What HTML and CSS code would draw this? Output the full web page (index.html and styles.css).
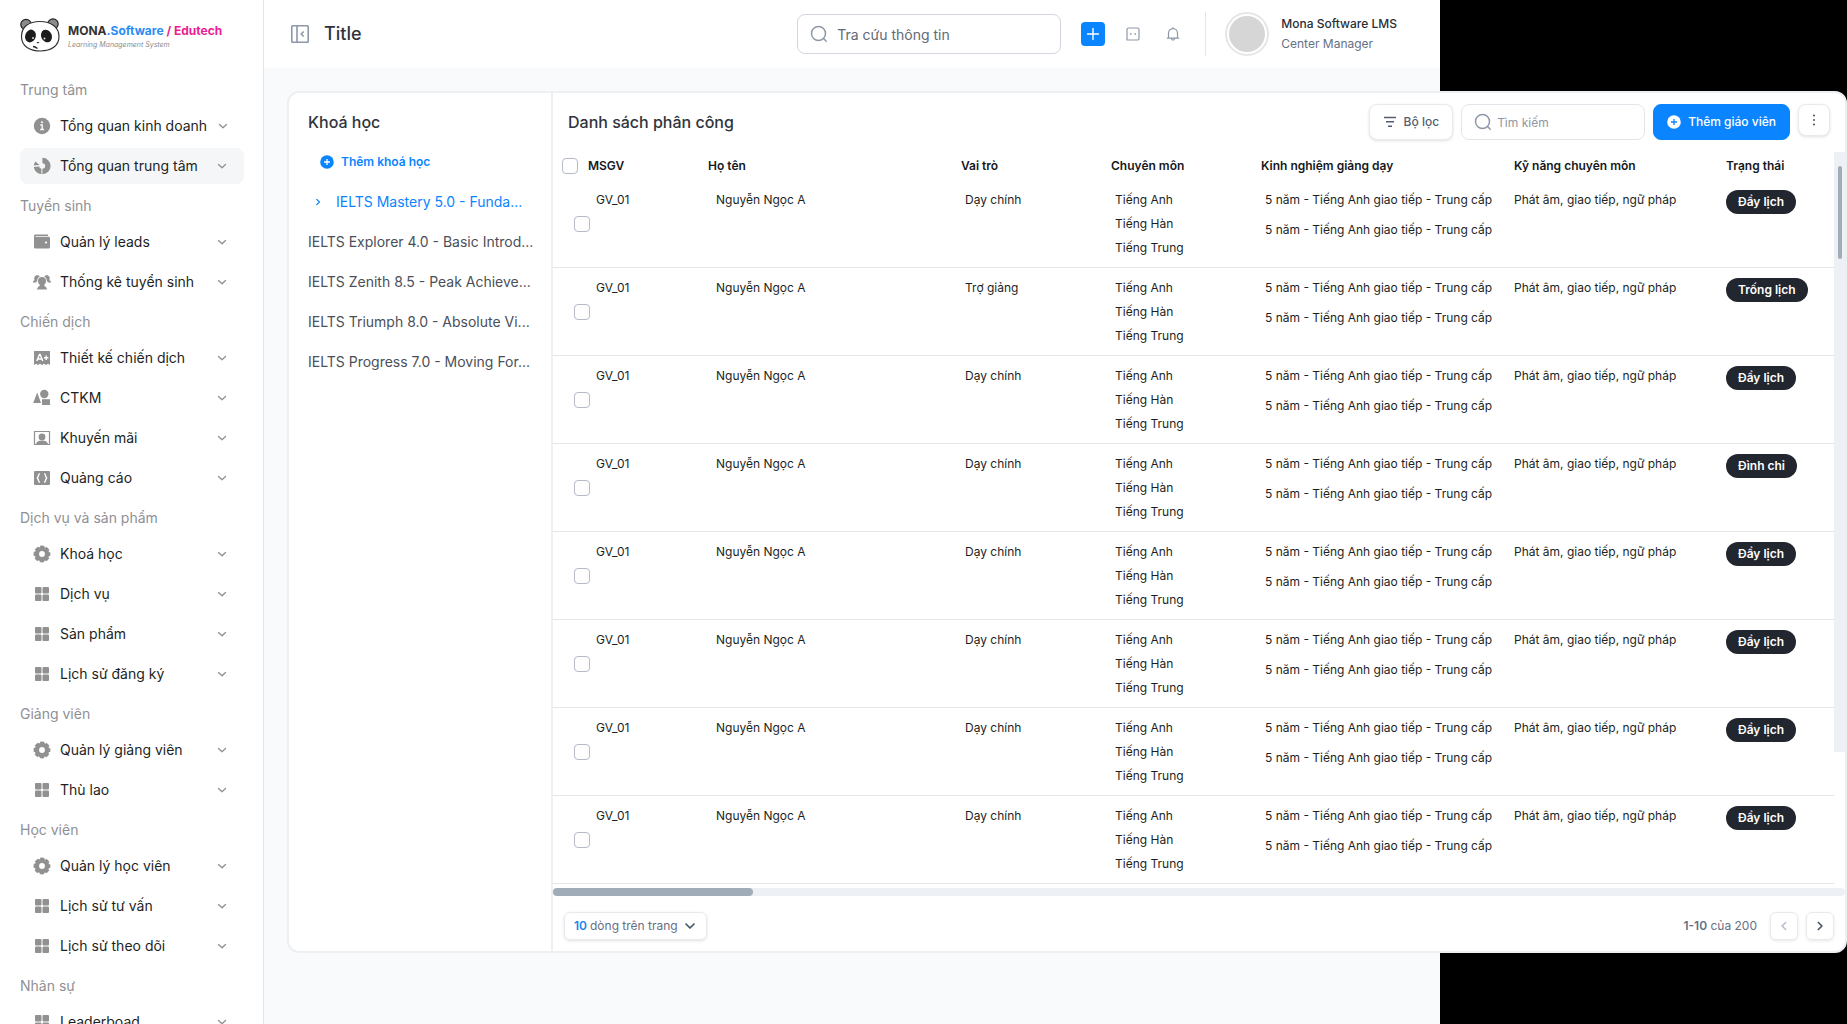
FILE: index.html
```html
<!DOCTYPE html>
<html lang="vi">
<head>
  <meta charset="UTF-8">
  <meta name="viewport" content="width=device-width, initial-scale=1.0">
  <title>Mona Software LMS</title>
  <link rel="stylesheet" href="styles.css">
</head>
<body>
  <!-- Icons -->
  <svg class="sprite" aria-hidden="true">
    <symbol id="i-down" viewBox="0 0 16 16"><path d="M4.5 6.5 8 9.8l3.5-3.3" fill="none" stroke="currentColor" stroke-width="1.3" stroke-linecap="round" stroke-linejoin="round"/></symbol>
    <symbol id="i-down-bold" viewBox="0 0 16 16"><path d="M4 6 8 10l4-4" fill="none" stroke="currentColor" stroke-width="1.700" stroke-linecap="round" stroke-linejoin="round"/></symbol>
    <symbol id="i-right" viewBox="0 0 16 16"><path d="m6.3 4.5 3.6 3.5-3.6 3.5" fill="none" stroke="currentColor" stroke-width="1.7" stroke-linecap="round" stroke-linejoin="round"/></symbol>
    <symbol id="i-left" viewBox="0 0 16 16"><path d="M9.7 4.5 6.1 8l3.6 3.5" fill="none" stroke="currentColor" stroke-width="1.6" stroke-linecap="round" stroke-linejoin="round"/></symbol>
    <symbol id="i-info" viewBox="0 0 20 20"><circle cx="10" cy="10" r="8.2" fill="currentColor"/><g fill="none" stroke="#fff" stroke-width="1.3"><path d="M8.3 9h1.9v4.5M8.2 13.5h3.8"/></g><circle cx="10" cy="6.3" r="1" fill="#fff"/></symbol>
    <symbol id="i-pie" viewBox="0 0 20 20"><g fill="currentColor"><path d="M10.400 1.800a8.200 8.200 0 0 1 0 16.400v-5.400a2.800 2.800 0 0 0 0-5.600z"/><path d="M9.400 18.200A8.200 8.200 0 0 1 1.800 11l5.400-.6a2.800 2.800 0 0 0 2.200 2.400z"/><path d="M1.800 9.600c.2-1.500.8-2.900 1.700-4l4 3.400z"/></g></symbol>
    <symbol id="i-wallet" viewBox="0 0 20 20"><path d="M2 4c0-.8.6-1.500 1.500-1.500H16V4H3.500v.8h13c.9 0 1.500.6 1.500 1.400V15c0 .9-.6 1.500-1.500 1.500h-13C2.600 16.500 2 15.900 2 15z" fill="currentColor"/><circle cx="14" cy="10.500" r="1.100" fill="#fff"/></symbol>
    <symbol id="i-team" viewBox="0 0 20 20"><g fill="currentColor"><circle cx="10" cy="9" r="4"/><path d="M5 17.500c.3-2 1.200-3 2.700-3.500l-.2-3h5l-.2 3c1.500.5 2.400 1.500 2.700 3.500z"/><path d="M.8 10.500c.2-1.300.8-2 1.800-2.300-1-2.600.1-5 2.600-5 1.200 0 2 .5 2.600 1.300C6 5.400 5.200 7 5.300 8.600L4 10.500zM19.200 10.500c-.2-1.300-.8-2-1.800-2.300 1-2.600-.1-5-2.600-5-1.200 0-2 .5-2.600 1.300C14 5.400 14.800 7 14.700 8.600L16 10.500z"/></g></symbol>
    <symbol id="i-grade" viewBox="0 0 20 20"><path d="M2 3h16v14l-2-1.300-2 1.300-2-1.300-2 1.300-2-1.300L6 17l-2-1.300L2 17z" fill="currentColor"/><path d="m4.800 13 2.700-6.500h.6l2.700 6.500M5.800 11h4M12 9.800h4.400M14.200 7.600V12" fill="none" stroke="#fff" stroke-width="1.400"/></symbol>
    <symbol id="i-shapes" viewBox="0 0 20 20"><g fill="currentColor"><path d="M5.200 4.500 9 15H1.200z"/><circle cx="12.300" cy="6" r="4.200"/><path d="M10 11.200h8V17h-8z"/></g></symbol>
    <symbol id="i-frame" viewBox="0 0 20 20"><path d="M2.500 3.500h15v13h-15z" fill="none" stroke="currentColor" stroke-width="1.200"/><circle cx="10" cy="9" r="3.400" fill="currentColor"/><path d="M4 16c.8-2.200 2-2.800 4-3.200h4c2 .4 3.200 1 4 3.200z" fill="currentColor"/></symbol>
    <symbol id="i-code" viewBox="0 0 20 20"><rect x="2" y="3" width="16" height="14" rx="1" fill="currentColor"/><path d="M7.800 5.800c-1.500.2-1.200 1.600-1.500 2.600L5.300 10l1 1.600c.3 1 0 2.400 1.500 2.600M12.200 5.800c1.500.2 1.200 1.600 1.500 2.600l1 1.600-1 1.600c-.3 1 0 2.400-1.500 2.600" fill="none" stroke="#fff" stroke-width="1.400"/></symbol>
    <symbol id="i-gear" viewBox="0 0 20 20"><circle cx="10" cy="10" r="5.100" fill="none" stroke="currentColor" stroke-width="4.400"/><circle cx="10" cy="10" r="7" fill="none" stroke="currentColor" stroke-width="2.800" stroke-dasharray="4 1.500" stroke-dashoffset="2"/></symbol>
    <symbol id="i-grid" viewBox="0 0 20 20"><g fill="currentColor"><rect x="3" y="3" width="6.500" height="6.500" rx="1"/><rect x="10.500" y="3" width="6.500" height="6.500" rx="1"/><rect x="3" y="10.500" width="6.500" height="6.500" rx="1"/><rect x="10.500" y="10.500" width="6.500" height="6.500" rx="1"/></g></symbol>
    <symbol id="i-search" viewBox="0 0 20 20"><g fill="none" stroke="currentColor" stroke-width="1.500" stroke-linecap="round"><circle cx="9.500" cy="9.500" r="7"/><path d="m14.800 14.800 2.400 2.400"/></g></symbol>
    <symbol id="i-panel" viewBox="0 0 20 20"><g fill="none" stroke="currentColor" stroke-width="1.600"><rect x="1.800" y="1.800" width="16.400" height="16.400" rx=".8"/><path d="M7 2v16"/><path d="M13.700 7.500 11.200 10l2.500 2.500"/></g></symbol>
    <symbol id="i-plus" viewBox="0 0 24 24"><path d="M12 6.500v11M6.500 12h11" stroke="currentColor" stroke-width="1.400" stroke-linecap="round"/></symbol>
    <symbol id="i-chat" viewBox="0 0 16 16"><path d="M3.600 2h8.800c1 0 1.600.7 1.600 1.600v8.800c0 1-.6 1.600-1.600 1.600H2V3.600C2 2.700 2.700 2 3.600 2z" fill="none" stroke="currentColor" stroke-width="1.200"/><g fill="currentColor"><rect x="5" y="7.200" width="1.500" height="1.600"/><rect x="9.500" y="7.200" width="1.500" height="1.600"/></g></symbol>
    <symbol id="i-bell" viewBox="0 0 16 16"><path d="M8 1.500v1M2.300 12.200h11.400M3.500 12V7.300C3.500 4.600 5.400 2.600 8 2.600s4.500 2 4.500 4.700V12M6.300 12.500c.2 1 .9 1.600 1.700 1.600s1.500-.6 1.700-1.600" fill="none" stroke="currentColor" stroke-width="1.200" stroke-linecap="round"/></symbol>
    <symbol id="i-filter" viewBox="0 0 14 14"><path d="M1 2.500h12M3 6.800h8M5 11.200h4" fill="none" stroke="currentColor" stroke-width="1.600"/></symbol>
    <symbol id="i-dots" viewBox="0 0 14 14"><g fill="currentColor"><circle cx="7" cy="2.500" r="1.100"/><circle cx="7" cy="7" r="1.100"/><circle cx="7" cy="11.500" r="1.100"/></g></symbol>
  </svg>

  <div class="app">
    <aside class="sidebar">
      <a href="#" class="logo">
        <svg class="logo-mark" viewBox="0 0 40 34" aria-hidden="true">
          <g fill="#8b8b8b" stroke="#222" stroke-width="1.200"><circle cx="6" cy="6.500" r="5.200"/><circle cx="33" cy="6" r="5.200"/></g>
          <path d="M20 3.500c11 0 19 5.500 19 15S31 33 20.500 33 1.500 28.500 1.500 18.500 9 3.500 20 3.500z" fill="#fff" stroke="#333" stroke-width="1.200"/>
          <ellipse cx="10.500" cy="18" rx="5.300" ry="6.500" transform="rotate(20 10.500 18)" fill="#1c1c1c"/>
          <ellipse cx="26.500" cy="18" rx="5.300" ry="6.500" transform="rotate(-25 26.500 18)" fill="#1c1c1c"/>
          <circle cx="13" cy="20" r="1" fill="#ddd"/><circle cx="24.500" cy="20.500" r="1" fill="#ddd"/>
          <path d="M16.500 24h3l-1.500 1.600z" fill="#222"/>
          <path d="M13 28.500c2 0 3 .8 4.500 2" fill="none" stroke="#222" stroke-width="1.300"/>
        </svg>
        <span class="logo-text">
          <span class="logo-name">MONA<span class="blue">.Software</span> <span class="pink">/ Edutech</span></span>
          <span class="logo-sub">Learning Management System</span>
        </span>
      </a>

      <nav>
        <section class="nav-group">
          <h2>Trung tâm</h2>
          <a href="#" class="nav-item"><svg><use href="#i-info"/></svg><span>Tổng quan kinh doanh</span><svg class="arrow"><use href="#i-down"/></svg></a>
          <a href="#" class="nav-item active"><svg><use href="#i-pie"/></svg><span>Tổng quan trung tâm</span><svg class="arrow"><use href="#i-down"/></svg></a>
        </section>
        <section class="nav-group">
          <h2>Tuyển sinh</h2>
          <a href="#" class="nav-item"><svg><use href="#i-wallet"/></svg><span>Quản lý leads</span><svg class="arrow"><use href="#i-down"/></svg></a>
          <a href="#" class="nav-item"><svg><use href="#i-team"/></svg><span>Thống kê tuyển sinh</span><svg class="arrow"><use href="#i-down"/></svg></a>
        </section>
        <section class="nav-group">
          <h2>Chiến dịch</h2>
          <a href="#" class="nav-item"><svg><use href="#i-grade"/></svg><span>Thiết kế chiến dịch</span><svg class="arrow"><use href="#i-down"/></svg></a>
          <a href="#" class="nav-item"><svg><use href="#i-shapes"/></svg><span>CTKM</span><svg class="arrow"><use href="#i-down"/></svg></a>
          <a href="#" class="nav-item"><svg><use href="#i-frame"/></svg><span>Khuyến mãi</span><svg class="arrow"><use href="#i-down"/></svg></a>
          <a href="#" class="nav-item"><svg><use href="#i-code"/></svg><span>Quảng cáo</span><svg class="arrow"><use href="#i-down"/></svg></a>
        </section>
        <section class="nav-group">
          <h2>Dịch vụ và sản phẩm</h2>
          <a href="#" class="nav-item"><svg><use href="#i-gear"/></svg><span>Khoá học</span><svg class="arrow"><use href="#i-down"/></svg></a>
          <a href="#" class="nav-item"><svg><use href="#i-grid"/></svg><span>Dịch vụ</span><svg class="arrow"><use href="#i-down"/></svg></a>
          <a href="#" class="nav-item"><svg><use href="#i-grid"/></svg><span>Sản phẩm</span><svg class="arrow"><use href="#i-down"/></svg></a>
          <a href="#" class="nav-item"><svg><use href="#i-grid"/></svg><span>Lịch sử đăng ký</span><svg class="arrow"><use href="#i-down"/></svg></a>
        </section>
        <section class="nav-group">
          <h2>Giảng viên</h2>
          <a href="#" class="nav-item"><svg><use href="#i-gear"/></svg><span>Quản lý giảng viên</span><svg class="arrow"><use href="#i-down"/></svg></a>
          <a href="#" class="nav-item"><svg><use href="#i-grid"/></svg><span>Thù lao</span><svg class="arrow"><use href="#i-down"/></svg></a>
        </section>
        <section class="nav-group">
          <h2>Học viên</h2>
          <a href="#" class="nav-item"><svg><use href="#i-gear"/></svg><span>Quản lý học viên</span><svg class="arrow"><use href="#i-down"/></svg></a>
          <a href="#" class="nav-item"><svg><use href="#i-grid"/></svg><span>Lịch sử tư vấn</span><svg class="arrow"><use href="#i-down"/></svg></a>
          <a href="#" class="nav-item"><svg><use href="#i-grid"/></svg><span>Lịch sử theo dõi</span><svg class="arrow"><use href="#i-down"/></svg></a>
        </section>
        <section class="nav-group">
          <h2>Nhân sự</h2>
          <a href="#" class="nav-item"><svg><use href="#i-grid"/></svg><span>Leaderboad</span><svg class="arrow"><use href="#i-down"/></svg></a>
        </section>
      </nav>
    </aside>

    <div class="main">
      <header class="topbar">
        <button type="button" class="collapse" aria-label="Thu gọn menu"><svg><use href="#i-panel"/></svg></button>
        <h1>Title</h1>
        <label class="search search-lg">
          <svg><use href="#i-search"/></svg>
          <input type="text" placeholder="Tra cứu thông tin" aria-label="Tra cứu thông tin">
        </label>
        <div class="actions">
          <button type="button" class="add-btn" aria-label="Thêm"><svg><use href="#i-plus"/></svg></button>
          <button type="button" class="icon-btn" aria-label="Tin nhắn"><svg><use href="#i-chat"/></svg></button>
          <button type="button" class="icon-btn" aria-label="Thông báo"><svg><use href="#i-bell"/></svg></button>
        </div>
        <div class="profile">
          <span class="avatar"></span>
          <div>
            <p class="profile-name">Mona Software LMS</p>
            <p class="profile-role">Center Manager</p>
          </div>
        </div>
      </header>

      <div class="card">
        <section class="courses">
          <h2>Khoá học</h2>
          <button type="button" class="add-course">
            <svg viewBox="0 0 14 14" aria-hidden="true"><circle cx="7" cy="7" r="6.800" fill="#0a84ff"/><path d="M7 4v6M4 7h6" stroke="#fff" stroke-width="1.300"/></svg>
            Thêm khoá học
          </button>
          <a href="#" class="course active"><svg><use href="#i-right"/></svg><span>IELTS Mastery 5.0 - Funda...</span></a>
          <a href="#" class="course"><span>IELTS Explorer 4.0 - Basic Introd...</span></a>
          <a href="#" class="course"><span>IELTS Zenith 8.5 - Peak Achieve...</span></a>
          <a href="#" class="course"><span>IELTS Triumph 8.0 - Absolute Vi...</span></a>
          <a href="#" class="course"><span>IELTS Progress 7.0 - Moving For...</span></a>
        </section>

        <section class="assign">
          <div class="toolbar">
            <h2>Danh sách phân công</h2>
            <button type="button" class="btn"><svg><use href="#i-filter"/></svg>Bộ lọc</button>
            <label class="search search-sm">
              <svg><use href="#i-search"/></svg>
              <input type="text" placeholder="Tìm kiếm" aria-label="Tìm kiếm">
            </label>
            <button type="button" class="btn btn-primary">
              <svg viewBox="0 0 14 14" aria-hidden="true"><circle cx="7" cy="7" r="6.800" fill="#fff"/><path d="M7 4v6M4 7h6" stroke="#0a84ff" stroke-width="1.300"/></svg>
              Thêm giáo viên
            </button>
            <button type="button" class="btn btn-more" aria-label="Thêm tuỳ chọn"><svg><use href="#i-dots"/></svg></button>
          </div>

          <div class="table-wrap">
            <table>
              <colgroup>
                <col class="c-check"><col class="c-code"><col class="c-wide"><col class="c-mid"><col class="c-mid"><col class="c-wide"><col class="c-skill"><col>
              </colgroup>
              <thead>
                <tr>
                  <th colspan="2"><label class="check-all"><input type="checkbox">MSGV</label></th>
                  <th>Họ tên</th>
                  <th>Vai trò</th>
                  <th>Chuyên môn</th>
                  <th>Kinh nghiệm giảng dạy</th>
                  <th>Kỹ năng chuyên môn</th>
                  <th>Trạng thái</th>
                </tr>
              </thead>
              <tbody id="rows"></tbody>
            </table>
            <div class="vscroll"><div class="vthumb"></div></div>
          </div>

          <div class="hscroll"><div class="hthumb"></div></div>

          <footer class="pager">
            <label class="page-size">
              <select aria-label="Số dòng trên trang">
                <option>10</option>
                <option>20</option>
                <option>50</option>
              </select>
              dòng trên trang
              <svg><use href="#i-down-bold"/></svg>
            </label>
            <p class="page-info"><b>1-10</b> của 200</p>
            <button type="button" class="page-btn" aria-label="Trang trước" disabled><svg><use href="#i-left"/></svg></button>
            <button type="button" class="page-btn" aria-label="Trang sau"><svg><use href="#i-right"/></svg></button>
          </footer>
        </section>
      </div>
    </div>
  </div>

  <script>
    const teachers = [
      { role: 'Dạy chính', status: 'Đầy lịch' },
      { role: 'Trợ giảng', status: 'Trống lịch' },
      { role: 'Dạy chính', status: 'Đầy lịch' },
      { role: 'Dạy chính', status: 'Đình chỉ' },
      { role: 'Dạy chính', status: 'Đầy lịch' },
      { role: 'Dạy chính', status: 'Đầy lịch' },
      { role: 'Dạy chính', status: 'Đầy lịch' },
      { role: 'Dạy chính', status: 'Đầy lịch' }
    ];

    document.getElementById('rows').innerHTML = teachers.map(t => `
      <tr>
        <td class="cell-check"><input type="checkbox" aria-label="Chọn GV_01"></td>
        <td class="cell-code">GV_01</td>
        <td class="cell-name">Nguyễn Ngọc A</td>
        <td class="cell-in">${t.role}</td>
        <td class="cell-in">Tiếng Anh<br>Tiếng Hàn<br>Tiếng Trung</td>
        <td class="cell-in"><p class="exp">5 năm - Tiếng Anh giao tiếp - Trung cấp</p><p class="exp">5 năm - Tiếng Anh giao tiếp - Trung cấp</p></td>
        <td>Phát âm, giao tiếp, ngữ pháp</td>
        <td class="cell-status"><span class="status">${t.status}</span></td>
      </tr>
    `).join('');
  </script>
</body>
</html>
```

FILE: styles.css
```css
:root {
  --blue: #0a84ff;
  --line: #edf0f3;
  --border: #e2e5ea;
  --icon: #8e98a8;
  --overhang: 407px;
}

* {
  box-sizing: border-box;
}

body {
  margin: 0;
  background: #000;
  color: #1d1f24;
  font-family: Inter, "Noto Sans", sans-serif;
  font-size: 12px;
  overflow: hidden;
}

h1, h2, p {
  margin: 0;
}

a {
  color: inherit;
  text-decoration: none;
}

button, input, select {
  font-family: inherit;
}

button {
  display: inline-flex;
  align-items: center;
  justify-content: center;
  padding: 0;
  border: none;
  background: none;
  cursor: pointer;
}

svg {
  flex: none;
}

.sprite {
  display: none;
}

/* The card is wider than the app frame and hangs over its right edge */
.app {
  display: flex;
  height: 100vh;
  margin-right: var(--overhang);
  background: #f9fafc;
}

/* Sidebar */
.sidebar {
  flex: none;
  width: 264px;
  padding: 18px 19px 0 20px;
  background: #fff;
  border-right: 1px solid var(--border);
  overflow: hidden;
}

.logo {
  display: flex;
  gap: 8px;
  height: 34px;
  margin-bottom: 28px;
}

.logo-mark {
  width: 40px;
  height: 34px;
}

.logo-text {
  display: flex;
  flex-direction: column;
  padding-top: 5px;
  white-space: nowrap;
}

.logo-name {
  font-size: 12px;
  line-height: 16px;
  font-weight: 700;
  color: #333;
}

.logo-name .blue {
  color: #2a8cf5;
}

.logo-name .pink {
  color: #ec1e91;
}

.logo-sub {
  font-size: 7px;
  line-height: 12px;
  font-style: italic;
  color: #8c8c8c;
}

.nav-group {
  display: flex;
  flex-direction: column;
  gap: 4px;
  margin-bottom: 12px;
}

.nav-group h2 {
  margin-bottom: 4px;
  font-size: 14px;
  line-height: 20px;
  font-weight: 400;
  color: #8f9094;
}

.nav-item {
  display: flex;
  align-items: center;
  gap: 8px;
  height: 36px;
  padding: 0 14px 0 12px;
  border-radius: 8px;
  font-size: 14px;
  line-height: 20px;
  white-space: nowrap;
}

.nav-item.active {
  background: #f5f6f8;
}

.nav-item svg {
  width: 20px;
  height: 20px;
  color: #919191;
}

.nav-item .arrow {
  width: 16px;
  height: 16px;
  margin-left: auto;
}

/* Top bar */
.main {
  flex: 1;
  min-width: 0;
}

.topbar {
  display: flex;
  align-items: center;
  height: 68px;
  padding: 0 43px 0 26px;
  background: #fff;
}

.topbar h1 {
  margin: 0 auto 0 14px;
  font-size: 18px;
  line-height: 24px;
  font-weight: 500;
  color: #2f343c;
}

.collapse {
  color: var(--icon);
}

.collapse svg {
  width: 20px;
  height: 20px;
}

.icon-btn {
  width: 24px;
  height: 24px;
  color: var(--icon);
}

.icon-btn svg {
  width: 16px;
  height: 16px;
}

.search {
  display: flex;
  align-items: center;
  gap: 8px;
  padding: 0 11px;
  border: 1px solid #d3d6e0;
  border-radius: 8px;
  background: #fff;
  color: var(--icon);
}

.search svg {
  width: 20px;
  height: 20px;
}

.search input {
  flex: 1;
  min-width: 0;
  height: 20px;
  padding: 0;
  border: none;
  outline: none;
  background: none;
  font-size: 14px;
}

.search input::placeholder {
  color: #626977;
  opacity: 1;
}

.search-lg {
  width: 264px;
  height: 40px;
}

.actions {
  display: flex;
  align-items: center;
  gap: 16px;
  padding: 0 20px;
}

.add-btn {
  width: 24px;
  height: 24px;
  border-radius: 4px;
  background: var(--blue);
  color: #fff;
}

.add-btn svg {
  width: 24px;
  height: 24px;
}

.profile {
  display: flex;
  align-items: center;
  gap: 12px;
  padding-left: 19px;
  border-left: 1px solid var(--border);
}

.avatar {
  width: 44px;
  height: 44px;
  border: 2px solid #e6e6e6;
  border-radius: 50%;
  padding: 2px;
  background: #d6d6d6 content-box;
}

.profile-name, .profile-role {
  font-size: 12px;
  line-height: 20px;
}

.profile-name {
  font-weight: 500;
  color: #2a2e36;
}

.profile-role {
  color: #667085;
}

/* Card */
.card {
  display: flex;
  margin: 23px calc(-1 * var(--overhang)) 0 23px;
  border: 2px solid var(--line);
  border-radius: 12px;
  background: #fff;
  position: relative;
  overflow: hidden;
}

.card h2 {
  font-size: 16px;
  line-height: 24px;
  font-weight: 500;
  color: #2f343c;
}

.courses {
  flex: none;
  width: 264px;
  padding: 17px 16px 0 19px;
  border-right: 2px solid var(--line);
}

.add-course {
  gap: 7px;
  height: 40px;
  margin: 8px 0 0 12px;
  font-size: 12px;
  line-height: 16px;
  font-weight: 600;
  color: var(--blue);
}

.add-course svg, .btn svg {
  width: 14px;
  height: 14px;
}

.course {
  display: flex;
  align-items: center;
  height: 40px;
  font-size: 14px;
  line-height: 20px;
  white-space: nowrap;
  color: #4b4f58;
}

.course.active {
  gap: 12px;
  padding-left: 4px;
  color: var(--blue);
}

.course svg {
  width: 12px;
  height: 12px;
}

.assign {
  flex: 1;
  min-width: 0;
}

.toolbar {
  display: flex;
  align-items: flex-start;
  gap: 8px;
  height: 59px;
  padding: 11px 15px 0;
}

.toolbar h2 {
  margin-right: auto;
  padding-top: 6px;
}

.btn {
  gap: 7px;
  height: 36px;
  padding: 0 13px;
  border: 1px solid #e8eaee;
  border-radius: 8px;
  background: #fff;
  box-shadow: 0 1px 3px rgba(0, 0, 0, 0.12);
  font-size: 12px;
  line-height: 16px;
  font-weight: 500;
  color: #545d70;
}

.btn-primary {
  border-color: var(--blue);
  background: var(--blue);
  box-shadow: none;
  color: #fff;
}

.btn-more {
  width: 32px;
  height: 32px;
  padding: 0;
}

.search-sm {
  width: 184px;
  height: 36px;
  gap: 4px;
  border-color: var(--border);
}

.search-sm input {
  font-size: 12px;
}

.search-sm input::placeholder {
  color: #8f97a3;
}

/* Table */
.table-wrap {
  display: flex;
  align-items: flex-start;
}

table {
  flex: 1;
  min-width: 0;
  table-layout: fixed;
  border-spacing: 0;
}

.c-check { width: 40px; }
.c-code { width: 115px; }
.c-wide { width: 253px; }
.c-mid { width: 150px; }
.c-skill { width: 212px; }

th {
  height: 28px;
  padding: 0;
  text-align: left;
  line-height: 16px;
  font-weight: 600;
  color: #16181d;
  white-space: nowrap;
}

.check-all {
  display: flex;
  align-items: center;
  gap: 10px;
  padding-left: 9px;
}

input[type="checkbox"] {
  appearance: none;
  display: block;
  width: 16px;
  height: 16px;
  margin: 0;
  border: 1px solid #b4bac8;
  border-radius: 4px;
  background: #fff;
}

input[type="checkbox"]:checked {
  background: var(--blue);
}

td {
  height: 88px;
  padding: 8px 0 0;
  border-bottom: 1px solid #e4e7ea;
  vertical-align: top;
  line-height: 24px;
  white-space: nowrap;
}

.cell-check {
  padding: 0 0 0 21px;
  vertical-align: middle;
}

.cell-name {
  padding-left: 8px;
}

.cell-code {
  padding-left: 3px;
}

.cell-in {
  padding-left: 4px;
}

.exp {
  margin-bottom: 6px;
}

.cell-status {
  padding-top: 10px;
}

.status {
  display: inline-block;
  height: 24px;
  padding: 0 12px;
  border-radius: 12px;
  background: #22262e;
  color: #fff;
  font-weight: 600;
}

/* Scroll bars */
.vscroll {
  flex: none;
  width: 11px;
  height: 600px;
  padding: 14px 3px 0 4px;
  background: #edf1f5;
}

.vthumb {
  height: 93px;
  border-radius: 2px;
  background: #a0adb9;
}

.hscroll {
  height: 8px;
  margin-top: 4px;
  border-radius: 4px;
  background: #edf1f5;
}

.hthumb {
  width: 200px;
  height: 8px;
  border-radius: 4px;
  background: #a0adb9;
}

/* Pager */
.pager {
  display: flex;
  align-items: center;
  height: 55px;
  padding: 4px 11px 0;
  line-height: 16px;
  color: #667085;
}

.page-size {
  display: flex;
  align-items: center;
  height: 28px;
  padding: 0 8px 0 9px;
  border: 1px solid #e8eaee;
  border-radius: 6px;
  box-shadow: 0 1px 3px rgba(0, 0, 0, 0.12);
}

.page-size select {
  appearance: none;
  padding: 0;
  border: none;
  outline: none;
  background: none;
  font-size: 12px;
  font-weight: 600;
  color: #1c84ee;
}

.page-size svg {
  width: 16px;
  height: 16px;
  margin-left: 4px;
  color: #475467;
}

.page-info {
  margin: 0 13px 0 auto;
}

.page-info b {
  font-weight: 600;
}

.page-btn {
  width: 28px;
  height: 28px;
  border: 1px solid #e8eaee;
  border-radius: 6px;
  box-shadow: 0 1px 3px rgba(0, 0, 0, 0.1);
  color: #475467;
}

.page-btn + .page-btn {
  margin-left: 8px;
}

.page-btn:disabled {
  color: #b8bec8;
}

.page-btn svg {
  width: 16px;
  height: 16px;
}
```
